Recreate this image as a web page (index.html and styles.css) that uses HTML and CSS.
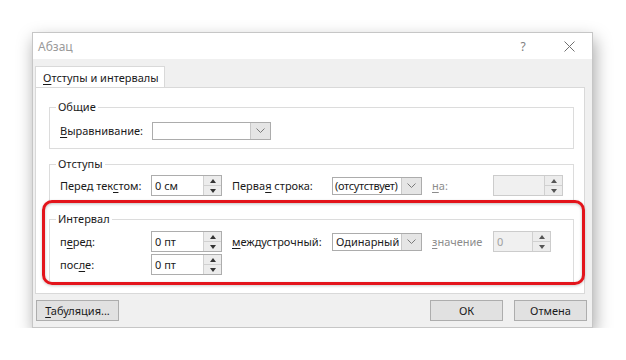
FILE: index.html
```html
<!DOCTYPE html>
<html lang="ru">
<head>
  <meta charset="UTF-8" />
  <meta name="viewport" content="width=device-width, initial-scale=1.0" />
  <title>Абзац</title>
  <link rel="stylesheet" href="styles.css">
</head>
<body>
  <div class="dialog">
    <div class="titlebar">
      <span class="title">Абзац</span>
      <span class="help">?</span>
      <span class="close">
        <svg width="11" height="11" viewBox="0 0 11 11"><path d="M0.5 0.5 L10.5 10.5 M10.5 0.5 L0.5 10.5" stroke="#707070" stroke-width="1" fill="none"/></svg>
      </span>
    </div>

    <div class="main">
      <div class="tabs">
        <div class="tab"><u>О</u>тступы и интервалы</div>
      </div>

      <div class="panel">
        <fieldset class="group group-general">
          <legend>Общие</legend>
          <div class="row">
            <span class="label"><u>В</u>ыравнивание:</span>
            <div class="select select-align">
              <span class="value"></span>
              <span class="arrow"><svg width="9" height="5" viewBox="0 0 9 5"><path d="M0.5 0.5 L4.5 4.5 L8.5 0.5" stroke="#7a7a7a" fill="none"/></svg></span>
            </div>
          </div>
        </fieldset>

        <fieldset class="group group-indent">
          <legend>Отступы</legend>
          <div class="row">
            <span class="label">Перед тек<u>с</u>том:</span>
            <div class="spin">
              <span class="value">0 см</span>
              <span class="spin-btns"><span class="up"></span><span class="down"></span></span>
            </div>
            <span class="label label-mid">Перва<u>я</u> строка:</span>
            <div class="select">
              <span class="value value-tight">(отсутствует)</span>
              <span class="arrow"><svg width="9" height="5" viewBox="0 0 9 5"><path d="M0.5 0.5 L4.5 4.5 L8.5 0.5" stroke="#7a7a7a" fill="none"/></svg></span>
            </div>
            <span class="label label-off"><u>н</u>а:</span>
            <div class="spin spin-off spin-wide">
              <span class="value"></span>
              <span class="spin-btns"><span class="up"></span><span class="down"></span></span>
            </div>
          </div>
        </fieldset>

        <fieldset class="group group-spacing">
          <legend>Интервал</legend>
          <div class="row">
            <span class="label">п<u>е</u>ред:</span>
            <div class="spin">
              <span class="value">0 пт</span>
              <span class="spin-btns"><span class="up"></span><span class="down"></span></span>
            </div>
            <span class="label label-mid"><u>м</u>еждустрочный:</span>
            <div class="select">
              <span class="value">Одинарный</span>
              <span class="arrow"><svg width="9" height="5" viewBox="0 0 9 5"><path d="M0.5 0.5 L4.5 4.5 L8.5 0.5" stroke="#7a7a7a" fill="none"/></svg></span>
            </div>
            <span class="label label-off"><u>з</u>начение</span>
            <div class="spin spin-off">
              <span class="value">0</span>
              <span class="spin-btns"><span class="up"></span><span class="down"></span></span>
            </div>
          </div>
          <div class="row">
            <span class="label">пос<u>л</u>е:</span>
            <div class="spin">
              <span class="value">0 пт</span>
              <span class="spin-btns"><span class="up"></span><span class="down"></span></span>
            </div>
          </div>
        </fieldset>

        <div class="highlight"></div>
      </div>
    </div>

    <div class="footer">
      <button class="btn btn-tabs"><u>Т</u>абуляция...</button>
      <span class="spacer"></span>
      <button class="btn">ОК</button>
      <button class="btn">Отмена</button>
    </div>
  </div>
</body>
</html>
```

FILE: styles.css
```css
body {
  margin: 0;
  padding: 32px 0 0 32px;
  background-color: #fff;
  font-family: "Noto Sans", "Open Sans", sans-serif;
  font-size: 11px;
  color: #1a1a1a;
}
u {
  text-decoration: underline;
  text-underline-offset: 2px;
}
.dialog {
  width: 561px;
  height: 296px;
  box-sizing: border-box;
  background-color: #f0f0f0;
  border: 1px solid #c6c6c6;
  box-shadow: 2px 7px 16px rgba(0,0,0,0.35);
  display: flex;
  flex-direction: column;
}
.titlebar {
  height: 26px;
  background-color: #fff;
  display: flex;
  align-items: center;
  padding-left: 5px;
}
.title {
  flex: 1;
  color: #9a9a9a;
  font-size: 12px;
}
.help {
  color: #808080;
  font-size: 12px;
  width: 46px;
  text-align: center;
}
.close {
  width: 46px;
  display: flex;
  justify-content: center;
  padding-top: 1px;
}
.main {
  padding: 7px 7px 0 2px;
}
.tabs {
  display: flex;
  height: 21px;
}
.tab {
  width: 130px;
  box-sizing: border-box;
  background-color: #fff;
  border: 1px solid #d9d9d9;
  border-bottom: none;
  padding: 3px 0 0 7px;
  margin-bottom: -1px;
  white-space: nowrap;
  position: relative;
}
.panel {
  position: relative;
  height: 207px;
  box-sizing: border-box;
  background-color: #fff;
  border: 1px solid #d9d9d9;
  padding: 11px 10px 0 13px;
}
.group {
  margin: 0;
  border: 1px solid #dcdcdc;
  padding: 0 10px;
}
.group legend {
  padding: 0 2px;
  margin-left: -4px;
  line-height: 16px;
}
.group-general {
  padding-top: 5px;
  padding-bottom: 7px;
}
.group-indent {
  margin-top: 7px;
  padding-top: 3px;
  padding-bottom: 6px;
}
.group-spacing {
  margin-top: 8px;
  padding-top: 4px;
  padding-bottom: 7px;
  display: flex;
  flex-direction: column;
  gap: 2px;
}
.row {
  display: flex;
  align-items: center;
  height: 21px;
}
.label {
  width: 91px;
  flex: none;
  white-space: nowrap;
}
.label-mid {
  width: 100px;
  margin-left: 10px;
}
.label-off {
  width: 61px;
  margin-left: 10px;
  color: #8c8c8c;
}
.select {
  width: 90px;
  height: 18px;
  box-sizing: border-box;
  border: 1px solid #acacac;
  display: flex;
  background-color: #fff;
}
.select-align {
  width: 119px;
  margin-left: 1px;
}
.select .value {
  flex: 1;
  padding-left: 3px;
  line-height: 16px;
  white-space: nowrap;
  overflow: hidden;
}
.select .value-tight {
  padding-left: 2px;
  letter-spacing: -0.35px;
}
.select .arrow {
  width: 19px;
  flex: none;
  border-left: 1px solid #c8c8c8;
  background-color: #e5e5e5;
  display: flex;
  align-items: center;
  justify-content: center;
}
.spin {
  width: 71px;
  height: 21px;
  box-sizing: border-box;
  border: 1px solid #adadad;
  display: flex;
  background-color: #fff;
}
.spin .value {
  flex: 1;
  padding-left: 3px;
  line-height: 19px;
}
.spin-btns {
  width: 17px;
  display: flex;
  flex-direction: column;
  border-left: 1px solid #d0d0d0;
}
.spin-btns span {
  flex: 1;
  background-color: #ececec;
  display: flex;
  align-items: center;
  justify-content: center;
}
.spin-btns .up {
  border-bottom: 1px solid #d0d0d0;
}
.spin-btns .up::after {
  content: "";
  border-left: 3px solid transparent;
  border-right: 3px solid transparent;
  border-bottom: 4px solid #333;
}
.spin-btns .down::after {
  content: "";
  border-left: 3px solid transparent;
  border-right: 3px solid transparent;
  border-top: 4px solid #333;
}
.spin-off {
  width: 58px;
  background-color: #f0f0f0;
  border-color: #cccccc;
  color: #a0a0a0;
}
.spin-wide {
  width: 70px;
}
.spin-off .spin-btns .up::after {
  border-bottom-color: #555;
}
.spin-off .spin-btns .down::after {
  border-top-color: #555;
}
.highlight {
  position: absolute;
  left: 6px;
  top: 112px;
  width: 543px;
  height: 85px;
  box-sizing: border-box;
  border: 3px solid #e3141b;
  border-radius: 10px;
  box-shadow: inset 0 1px 3px rgba(0,0,0,0.25), 0 1px 3px rgba(0,0,0,0.2);
}
.footer {
  display: flex;
  padding: 6px 5px 0 3px;
  gap: 11px;
}
.spacer {
  flex: 1;
}
.btn {
  width: 73px;
  height: 21px;
  box-sizing: border-box;
  background-color: #e1e1e1;
  border: 1px solid #adadad;
  font-family: inherit;
  font-size: 11px;
  color: #1a1a1a;
  padding: 0;
}
.btn-tabs {
  width: 83px;
}
```
